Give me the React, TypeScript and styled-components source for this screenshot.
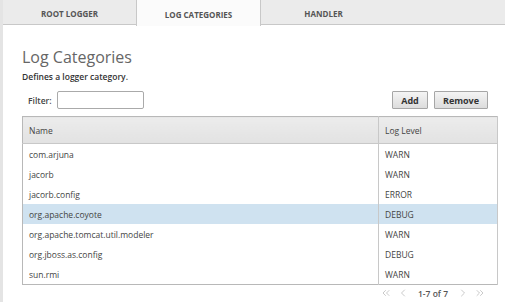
import { createGlobalStyle } from "styled-components";
import styled from "styled-components";
import { ChevronLeft, ChevronRight, ChevronsLeft, ChevronsRight } from "lucide-react";

const GlobalStyle = createGlobalStyle`
    html, body {
        margin: 0;
        padding: 0;
        background: #ffffff;
        font-family: "Open Sans", "Liberation Sans", sans-serif;
        color: #4d4d4d;
    }
`;

type Category = { name: string; level: string };

const categories: Category[] = [
    { name: "com.arjuna", level: "WARN" },
    { name: "jacorb", level: "WARN" },
    { name: "jacorb.config", level: "ERROR" },
    { name: "org.apache.coyote", level: "DEBUG" },
    { name: "org.apache.tomcat.util.modeler", level: "WARN" },
    { name: "org.jboss.as.config", level: "DEBUG" },
    { name: "sun.rmi", level: "WARN" },
];

const Page = styled.div`
    width: 505px;
    min-height: 302px;
    border-left: 3px solid #e4e4e4;
    box-sizing: border-box;
`;

const TabBar = styled.div`
    display: flex;
    height: 25px;
    background: #ebebeb;
    border-bottom: 1px solid #c8c8c8;
    box-sizing: border-box;
`;

const Tab = styled.div<{ $active?: boolean; $width: number }>`
    width: ${p => p.$width}px;
    height: ${p => (p.$active ? 26 : 24)}px;
    display: flex;
    align-items: center;
    justify-content: center;
    font-size: 8px;
    font-weight: 700;
    color: #555;
    box-sizing: border-box;
    background: ${p => (p.$active ? "#fbfbfb" : "transparent")};
    border-left: ${p => (p.$active ? "1px solid #c8c8c8" : "none")};
    border-right: ${p => (p.$active ? "1px solid #c8c8c8" : "none")};
    padding-top: 2px;
`;

const Content = styled.div`
    padding: 22px 7px 0 19px;
`;

const Title = styled.h1`
    margin: 0;
    font-size: 16px;
    font-weight: 400;
    color: #666;
    line-height: 20px;
`;

const Subtitle = styled.div`
    margin-top: 4px;
    font-size: 8.5px;
    font-weight: 600;
    color: #333;
    line-height: 12px;
`;

const Toolbar = styled.div`
    display: flex;
    align-items: center;
    margin-top: 8px;
    height: 18px;
`;

const FilterLabel = styled.label`
    font-size: 8.5px;
    font-weight: 600;
    color: #444;
    margin-left: 6px;
    margin-right: 5px;
`;

const FilterInput = styled.input`
    width: 87px;
    height: 18px;
    box-sizing: border-box;
    border: 1px solid #aaa;
    border-radius: 2px;
    padding: 0 4px;
    font-family: inherit;
`;

const Buttons = styled.div`
    margin-left: auto;
    margin-right: 10px;
    display: flex;
    gap: 6px;
`;

const Button = styled.button<{ $width: number }>`
    width: ${p => p.$width}px;
    height: 18px;
    box-sizing: border-box;
    border: 1px solid #a6a6a6;
    border-radius: 1px;
    background: linear-gradient(#f4f4f4, #dcdcdc);
    font-family: inherit;
    font-size: 9px;
    font-weight: 700;
    color: #333;
    padding: 0;
`;

const Table = styled.table`
    margin-top: 7px;
    width: 476px;
    border-collapse: collapse;
    border: 1px solid #b8b8b8;
    font-size: 8.5px;
    color: #444;
`;

const HeadCell = styled.th<{ $width?: number }>`
    height: 26px;
    text-align: left;
    font-weight: 400;
    padding: 0 0 0 6px;
    background: linear-gradient(#ececec, #e2e2e2);
    border-bottom: 1px solid #c8c8c8;
    border-right: 1px solid #c8c8c8;
    width: ${p => (p.$width ? `${p.$width}px` : "auto")};
`;

const Row = styled.tr<{ $selected?: boolean }>`
    background: ${p => (p.$selected ? "#cfe2f0" : "#fff")};
`;

const Cell = styled.td`
    height: 20px;
    padding: 0 0 0 6px;
    border-right: 1px solid #c8c8c8;
`;

const Pager = styled.div`
    display: flex;
    justify-content: flex-end;
    align-items: center;
    gap: 5px;
    padding-right: 12px;
    margin-top: 1px;
    font-size: 8.5px;
    height: 14px;
    color: #b8b8b8;
`;

const PagerText = styled.span`
    font-weight: 600;
    color: #555;
    margin: 0 4px;
    line-height: 13px;
`;

export default function App() {
    return (
        <>
            <GlobalStyle />
            <Page>
                <TabBar>
                    <Tab $width={133}>ROOT LOGGER</Tab>
                    <Tab $width={125} $active>LOG CATEGORIES</Tab>
                    <Tab $width={125}>HANDLER</Tab>
                </TabBar>
                <Content>
                    <Title>Log Categories</Title>
                    <Subtitle>Defines a logger category.</Subtitle>
                    <Toolbar>
                        <FilterLabel>Filter:</FilterLabel>
                        <FilterInput type="text" />
                        <Buttons>
                            <Button $width={36}>Add</Button>
                            <Button $width={54}>Remove</Button>
                        </Buttons>
                    </Toolbar>
                    <Table>
                        <thead>
                            <tr>
                                <HeadCell $width={349}>Name</HeadCell>
                                <HeadCell>Log Level</HeadCell>
                            </tr>
                        </thead>
                        <tbody>
                            {categories.map((category: Category, index: number) => {
                                return <Row key={index} $selected={category.name === "org.apache.coyote"}>
                                    <Cell>{category.name}</Cell>
                                    <Cell>{category.level}</Cell>
                                </Row>
                            })}
                        </tbody>
                    </Table>
                    <Pager>
                        <ChevronsLeft size={12} strokeWidth={1.5} />
                        <ChevronLeft size={12} strokeWidth={1.5} />
                        <PagerText>1-7 of 7</PagerText>
                        <ChevronRight size={12} strokeWidth={1.5} />
                        <ChevronsRight size={12} strokeWidth={1.5} />
                    </Pager>
                </Content>
            </Page>
        </>
    );
}
